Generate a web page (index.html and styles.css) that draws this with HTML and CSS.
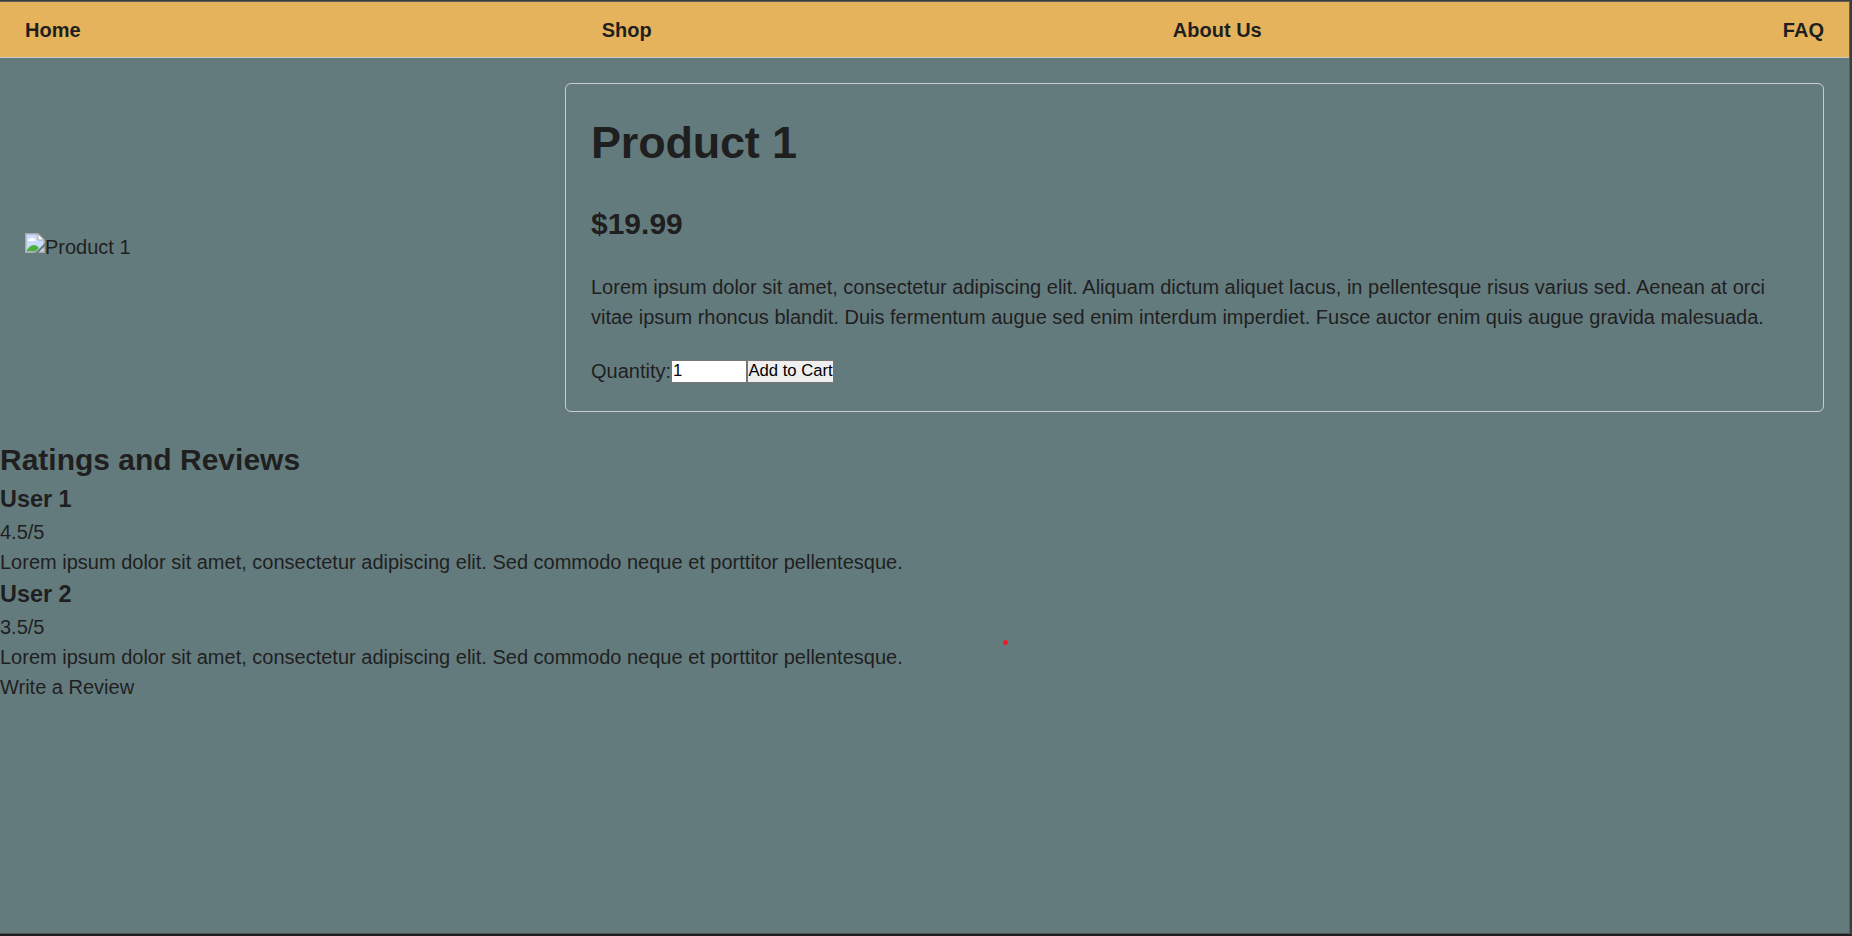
FILE: index.html
```html
<!DOCTYPE html>
<html lang="en">
<head>
<meta charset="utf-8">
<title>Product 1</title>
<link rel="stylesheet" href="styles.css">
</head>
<body>
<div class="page">
  <nav class="nav">
    <a>Home</a><a>Shop</a><a>About Us</a><a>FAQ</a>
  </nav>
  <main class="product">
    <div class="photo">
      <svg class="broken" width="20" height="20" viewBox="0 0 20 20">
        <path d="M1 1H13L19 7V19H1Z" fill="#c9dcfa"/>
        <path d="M3 8Q3 5.500 5.500 5.500Q7 3.500 9 5.500Q11 6 10.500 8Z" fill="#fff"/>
        <path d="M1.500 18.500Q4 12 9 12Q12 12 14 15L10.500 18.500Z" fill="#4caf3a"/>
        <path d="M.75 .75H13L19.250 7V19.250H.75Z" fill="none" stroke="#a9a9b0" stroke-width="1.500"/>
        <path d="M13 1V7H19Z" fill="#fff" stroke="#a9a9b0"/>
        <path d="M20 10L10 20H13L20 13Z" fill="#647b7e"/>
      </svg><span>Product 1</span>
    </div>
    <section class="card">
      <h1>Product 1</h1>
      <h2>$19.99</h2>
      <p>Lorem ipsum dolor sit amet, consectetur adipiscing elit. Aliquam dictum aliquet lacus, in pellentesque risus varius sed. Aenean at orci vitae ipsum rhoncus blandit. Duis fermentum augue sed enim interdum imperdiet. Fusce auctor enim quis augue gravida malesuada.</p>
      <form class="order">
        <label for="quantity">Quantity:</label><input id="quantity" type="text" value="1"><button type="button">Add to Cart</button>
      </form>
    </section>
  </main>
  <section class="reviews">
    <h2>Ratings and Reviews</h2>
    <h3>User 1</h3>
    <p>4.5/5</p>
    <p>Lorem ipsum dolor sit amet, consectetur adipiscing elit. Sed commodo neque et porttitor pellentesque.</p>
    <h3>User 2</h3>
    <p>3.5/5</p>
    <p>Lorem ipsum dolor sit amet, consectetur adipiscing elit. Sed commodo neque et porttitor pellentesque.</p>
    <p>Write a Review</p>
  </section>
  <i class="dot"></i>
</div>
</body>
</html>
```
FILE: styles.css
```css
* { box-sizing: border-box; margin: 0; padding: 0; }
body {
  font: 20px/1.5 "Liberation Sans", Arial, sans-serif;
  color: #1f1f1f;
  background: #647b7e;
  overflow: hidden;
}
.page {
  position: relative;
  height: 936px;
  padding: 1px 1px 0 0;
  border: solid #3c3c3c;
  border-width: 1px 2px 2px 0;
  border-bottom-color: #1f1f1f;
  box-shadow: inset -1px 1px #5f5f5f, inset 0 -1px #4a5253;
}
.nav {
  display: flex;
  justify-content: space-between;
  padding: 12.5px 25px;
  height: 56px;
  background: #e5b35b;
  border-bottom: 1px solid #ccc;
  font-weight: bold;
}
.product {
  display: flex;
  align-items: center;
  padding: 25px 25px 25.5px;
}
.photo {
  flex: 0 0 540px;
  display: flex;
  align-items: center;
}
.broken { flex: none; margin-top: -9px; }
.photo span { margin-top: -1px; }
.card {
  flex: 1;
  display: flex;
  flex-direction: column;
  gap: 25px;
  padding: 25px 25px 24.5px;
  border: 1px solid #ccc;
  border-radius: 6px;
}
h1 { font-size: 45px; letter-spacing: -.2px; }
.card h1, .card h2 { margin-top: -.5px; margin-bottom: .5px; }
h2 { font-size: 30px; }
h3 { font-size: 23.4px; }
.order { display: flex; align-items: center; margin-top: -.5px; }
.order input {
  width: 76px;
  height: 23px;
  border: 1px solid #767676;
  background: #fff;
  padding: 0 1px;
  font: 16.667px "Liberation Sans", Arial, sans-serif;
}
.order button {
  width: 87px;
  height: 23px;
  padding: 0;
  border: 1px solid #767676;
  border-radius: 1px;
  background: #efefef;
  color: #000;
  font: 16.667px "Liberation Sans", Arial, sans-serif;
}
.dot {
  position: absolute;
  left: 1003px;
  top: 639px;
  width: 5px;
  height: 5px;
  border-radius: 50%;
  background: #ed1c24;
}
```
